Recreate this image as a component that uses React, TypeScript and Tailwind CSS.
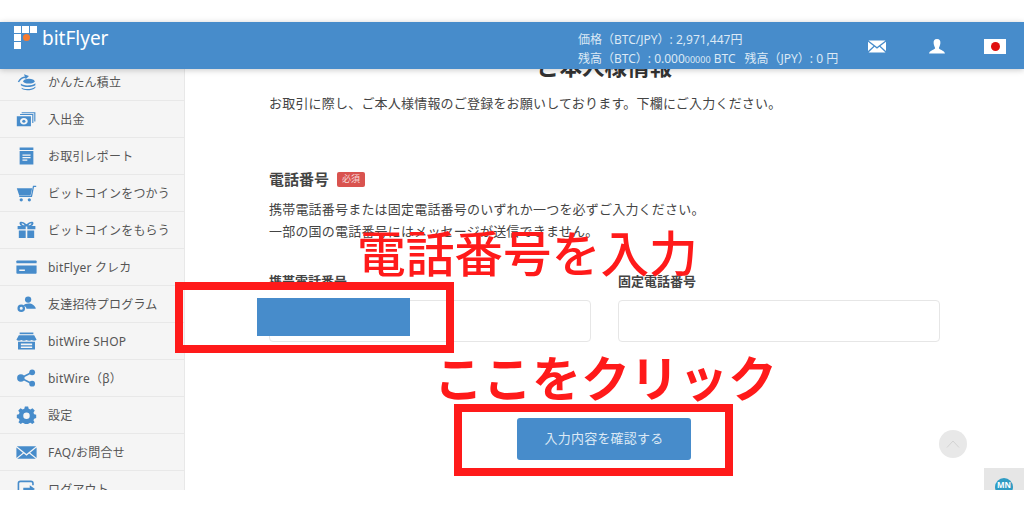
import React from "react";

const BLUE = "#478ccb";

const I = ({ children }: { children: React.ReactNode }) => (
  <svg width="21" height="18" viewBox="0 0 26 22" fill={BLUE} className="shrink-0">
    {children}
  </svg>
);

const icons: Record<string, React.ReactNode> = {
  coin: (
    <I>
      <path d="M3 11 C5 7 8 5 12 5" stroke={BLUE} strokeWidth="1.8" fill="none" />
      <path d="M10 1.5 L16 3.5 L12 7.5 Z" />
      <ellipse cx="16" cy="10" rx="7" ry="3" />
      <path d="M6 13 C8 16 20 16 24 12.5 V15 C20 18 9 18 6 15 Z" />
      <path d="M7 18 C10 20.5 20 20.5 24 16.5 V18 C20 22 10 22 7 19.5 Z" />
    </I>
  ),
  money: (
    <I>
      <path d="M7 2.5 H24 V14 H22.6 V3.9 H7 Z M5 4.8 H21.5 V16 H20.1 V6.2 H5 Z" />
      <path fillRule="evenodd" d="M1 7.5 H18.5 V20 H1 Z M9.7 9.8 C6.8 9.8 5 11.7 5 13.7 C5 15.8 6.8 17.7 9.7 17.7 C12.7 17.7 14.5 15.8 14.5 13.7 C14.5 11.7 12.7 9.8 9.7 9.8 Z" />
      <ellipse cx="9.7" cy="13.7" rx="2" ry="1.9" />
    </I>
  ),
  report: (
    <I>
      <path fillRule="evenodd" d="M4.5 0.5 H21.5 V3.6 H4.5 Z M4.5 4.8 H21.5 V21.5 H4.5 Z M8 9 V10.6 H18 V9 Z M8 12.2 V13.8 H18 V12.2 Z M8 15.4 V17 H14 V15.4 Z" />
    </I>
  ),
  cart: (
    <I>
      <path d="M1 5 H20 L18 14 H4 Z" />
      <path d="M18.5 14.5 L21 2 H25 V3.6 H22.3 L19.8 15.8 H4 V14.5 Z" />
      <circle cx="6.5" cy="19.5" r="2" />
      <circle cx="16.5" cy="19.5" r="2" />
    </I>
  ),
  gift: (
    <I>
      <path fillRule="evenodd" d="M5 1 C7.5 0 11 2 13 4 C15 2 18.5 0 21 1 C22.5 2.5 21 5.5 18.8 6 H24 V10 H14 V6.6 H12 V10 H2 V6 H7.2 C5 5.5 3.5 2.5 5 1 Z M7 2.8 C6.5 3.8 8.5 5 10.8 5.2 C9.5 3.6 8 2.6 7 2.8 Z M19 2.8 C18 2.6 16.5 3.6 15.2 5.2 C17.5 5 19.5 3.8 19 2.8 Z" />
      <path d="M3.5 11.5 H12 V21 H3.5 Z M14 11.5 H22.5 V21 H14 Z" />
    </I>
  ),
  card: (
    <I>
      <path d="M0.5 4 C0.5 3.3 1 3 1.5 3 H24.5 C25.1 3 25.5 3.3 25.5 4 V6.5 H0.5 Z" />
      <path fillRule="evenodd" d="M0.5 9 H25.5 V18.5 C25.5 19.2 25.1 19.5 24.5 19.5 H1.5 C1 19.5 0.5 19.2 0.5 18.5 Z M4 14 V16 H11 V14 Z" />
    </I>
  ),
  friend: (
    <I>
      <circle cx="15" cy="5.5" r="3.9" />
      <path d="M9 13 C11 9.5 19 9.5 21 12 C22.5 13 24.5 15 24.5 17 H13 C13 15.5 11 13.5 9 13 Z" />
      <path fillRule="evenodd" d="M6.5 11.5 A4.7 4.7 0 1 0 6.5 20.9 A4.7 4.7 0 1 0 6.5 11.5 Z M6.5 14.3 A1.9 1.9 0 1 1 6.5 18.1 A1.9 1.9 0 1 1 6.5 14.3 Z" />
    </I>
  ),
  shop: (
    <I>
      <path d="M4.5 0.5 H21.5 V2.6 H4.5 Z" />
      <path d="M3.5 4 H22.5 L25.5 9.5 C23.5 11 21.5 11 19.5 9.8 C17.5 11 15 11 13 9.8 C11 11 8.5 11 6.5 9.8 C4.5 11 2.5 11 0.5 9.5 Z" />
      <path fillRule="evenodd" d="M2.5 12 H23.5 V21.5 H2.5 Z M6 14.2 V16.2 H20 V14.2 Z M6 17.8 V19.8 H20 V17.8 Z" />
    </I>
  ),
  share: (
    <I>
      <circle cx="6" cy="11" r="4.6" />
      <circle cx="20" cy="4" r="3.6" />
      <circle cx="20" cy="18" r="3.6" />
      <path d="M6 11 L20 4 M6 11 L20 18" stroke={BLUE} strokeWidth="2" />
    </I>
  ),
  gear: (
    <I>
      <path fillRule="evenodd" d="M11 0.5 H15 L15.7 3.4 L17.8 4.3 L20.4 2.7 L23.2 5.5 L21.6 8.1 L22.5 10.1 L25 10.8 V14.8 L22.5 15.5 L21.6 17.5 L23 20 L20.2 22 L17.8 20.5 L15.7 21.4 L15 22 H11 L10.3 21.4 L8.2 20.5 L5.8 22 L3 20 L4.4 17.5 L3.5 15.5 L1 14.8 V10.8 L3.5 10.1 L4.4 8.1 L2.8 5.5 L5.6 2.7 L8.2 4.3 L10.3 3.4 Z M13 8 A4 4 0 1 0 13 16 A4 4 0 1 0 13 8 Z" />
    </I>
  ),
  mail: (
    <I>
      <path d="M1 4 H25 L13 13.5 Z" />
      <path d="M0.5 5.5 L8.5 12 L0.5 18.5 Z M25.5 5.5 L17.5 12 L25.5 18.5 Z" />
      <path d="M9.7 13 L13 15.7 L16.3 13 L24.5 19.5 H1.5 Z" />
    </I>
  ),
  logout: (
    <I>
      <path d="M21 6.5 V4 C21 2.5 20 1.5 18.5 1.5 H5.5 C4 1.5 3 2.5 3 4 V18 C3 19.5 4 20.5 5.5 20.5 H18.5 C20 20.5 21 19.5 21 18 V15.5" fill="none" stroke={BLUE} strokeWidth="2" />
      <path d="M9 9.5 H17 V6.5 L23.5 11 L17 15.5 V12.5 H9 Z" />
    </I>
  ),
};

const menu = [
  ["coin", "かんたん積立"],
  ["money", "入出金"],
  ["report", "お取引レポート"],
  ["cart", "ビットコインをつかう"],
  ["gift", "ビットコインをもらう"],
  ["card", "bitFlyer クレカ"],
  ["friend", "友達招待プログラム"],
  ["shop", "bitWire SHOP"],
  ["share", "bitWire（β）"],
  ["gear", "設定"],
  ["mail", "FAQ/お問合せ"],
  ["logout", "ログアウト"],
];

const jp = "font-['Noto_Sans','Noto_Sans_CJK_JP',sans-serif]";

export default function App() {
  return (
    <div className={`relative h-[512px] w-[1024px] overflow-hidden bg-white ${jp}`}>
      <div className="h-[22px]" />
      <header className="relative z-10 flex h-[47px] items-start bg-[#478ccb] shadow-[0_1px_6px_rgba(0,0,0,0.22)]">
        <div className="ml-[14px] mt-[4px] grid grid-cols-[7px_7px_7px] grid-rows-[7px_7px_7px] gap-[1px]">
          <span className="bg-white" />
          <span className="bg-white" />
          <span className="bg-white" />
          <span className="bg-white" />
          <span className="col-span-2 flex items-center">
            <span className="ml-[1px] h-[7px] w-[7px] rounded-full bg-[#f47a2f]" />
          </span>
          <span className="bg-white" />
        </div>
        <span className="ml-[5px] mt-[1px] w-[66px] text-[19px] leading-[30px] text-white">bitFlyer</span>
        <div className="ml-[470px] mt-[9px] text-[12px] leading-[18.5px] text-[#dce9f5]">
          <div>価格（BTC/JPY）: 2,971,447円</div>
          <div className="whitespace-nowrap">
            残高（BTC）: 0.000<span className="text-[9px]">00000</span> BTC<span className="ml-[9px]">残高（JPY）: 0 円</span>
          </div>
        </div>
        <div className="ml-auto mr-[18px] mt-[17px] flex items-center">
          <svg width="18" height="13" viewBox="0 0 18 13" fill="white">
            <path d="M0.5 0.5 H17.5 L9 7 Z" />
            <path d="M0 1.8 L5.5 6 L0 11 Z M18 1.8 L12.5 6 L18 11 Z" />
            <path d="M6.5 6.8 L9 8.7 L11.5 6.8 L17.5 12.5 H0.5 Z" />
          </svg>
          <svg width="18" height="15" viewBox="0 0 18 16" fill="white" className="ml-[42px]">
            <path d="M9 0 C12 0 12.8 2 12.6 4.5 C12.4 7 11.2 8.5 11 9.8 C11.5 11.5 17 12 17.5 15.5 H0.5 C1 12 6.5 11.5 7 9.8 C6.8 8.5 5.6 7 5.4 4.5 C5.2 2 6 0 9 0 Z" />
          </svg>
          <span className="ml-[38px] flex h-[15px] w-[22px] items-center justify-center bg-white">
            <span className="h-[9px] w-[9px] rounded-full bg-[#e0100f]" />
          </span>
        </div>
      </header>

      <div className="flex h-[421px] overflow-hidden">
        <aside className="w-[185px] shrink-0 overflow-hidden border-r border-[#e8e8e8] bg-[#f5f5f5]">
          <ul className="mt-[-5px]">
            {menu.map(([icon, label]) => (
              <li key={label} className="flex h-[37px] items-center gap-[11px] border-b border-[#e8e8e8] pl-[16px] text-[12px] tracking-[0.2px] text-[#555555]">
                {icons[icon]}
                <span className="pt-[2px]">{label}</span>
              </li>
            ))}
          </ul>
        </aside>

        <main className="flex-1 overflow-hidden">
          <div className="mx-[84px] text-[#444]">
            <h1 className="mt-[-17px] text-center text-[22.5px] font-bold leading-[30px] text-[#333]">ご本人様情報</h1>
            <p className="mt-[11px] text-[13px] leading-[20px] tracking-[0.2px]">お取引に際し、ご本人様情報のご登録をお願いしております。下欄にご入力ください。</p>
            <div className="mt-[55px] flex items-center">
              <h2 className="text-[15px] font-bold leading-[22px] text-[#444]">電話番号</h2>
              <span className="ml-[8px] flex h-[15px] w-[28px] items-center justify-center rounded-[2px] bg-[#d9534f] text-[9px] text-[#f6d9d8]">必須</span>
            </div>
            <p className="mt-[8px] text-[13px] leading-[22px] tracking-[0.2px]">携帯電話番号または固定電話番号のいずれか一つを必ずご入力ください。</p>
            <p className="text-[13px] leading-[22px] tracking-[0.2px]">一部の国の電話番号にはメッセージが送信できません。</p>
            <div className="mt-[27px] flex gap-[27px]">
              <div className="w-[323px]">
                <label className="block text-[13px] font-bold leading-[24px]">携帯電話番号</label>
                <div className="mt-[7px] h-[42px] rounded-[4px] border border-[#e6e6e6] bg-white" />
              </div>
              <div className="w-[323px]">
                <label className="block text-[13px] font-bold leading-[24px]">固定電話番号</label>
                <div className="mt-[7px] h-[42px] rounded-[4px] border border-[#e6e6e6] bg-white" />
              </div>
            </div>
            <div className="mt-[76px] flex justify-center">
              <button className="ml-[-1px] h-[42px] w-[174px] rounded-[3px] bg-[#478ccb] text-[13px] tracking-[0.2px] text-[#dce9f5]">入力内容を確認する</button>
            </div>
          </div>
        </main>
      </div>

      <div className="absolute left-[175px] top-[282px] h-[71px] w-[279px] border-[8px] border-[#ff1a1a]" />
      <div className="absolute left-[257px] top-[298px] h-[38px] w-[153px] bg-[#478ccb]" />
      <div className="absolute left-[454px] top-[404px] h-[72px] w-[279px] border-[8px] border-[#ff1a1a]" />
      <div className="absolute left-[357px] top-[218px] whitespace-nowrap text-[48.7px] font-medium leading-[70px] text-[#ff1a1a]">電話番号を入力</div>
      <div className="absolute left-[434px] top-[343px] whitespace-nowrap text-[49px] font-bold leading-[70px] text-[#ff1a1a]">ここをクリック</div>

      <div className="absolute left-[939px] top-[430px] flex h-[28px] w-[28px] items-center justify-center rounded-full bg-[#e8e8e8]">
        <svg width="14" height="8" viewBox="0 0 14 8" fill="none" stroke="#d2d2d2" strokeWidth="1">
          <path d="M1 7.5 L7 1 L13 7.5" />
        </svg>
      </div>
      <div className="absolute left-[984px] top-[468px] flex h-[22px] w-[40px] justify-center overflow-hidden bg-[#e6e6e6]">
        <div className="mt-[10px] flex h-[18px] w-[18px] items-start justify-center rounded-full bg-[#2f9cc4] pt-[2px] text-[8px] font-bold leading-[10px] text-white">MN</div>
      </div>
    </div>
  );
}
